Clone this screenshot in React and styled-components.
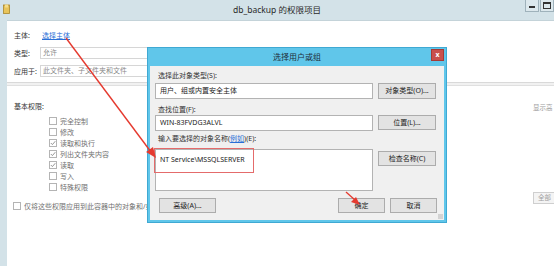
import React from 'react';
import styled, { createGlobalStyle } from 'styled-components';

const GlobalStyle = createGlobalStyle`
  html, body {
    margin: 0;
    padding: 0;
    background: #ffffff;
  }
  body {
    font-family: "Noto Sans", "Noto Sans CJK SC", sans-serif;
    font-size: 7px;
    color: #333;
  }
`;

const Frame = styled.div`
  position: relative;
  width: 554px;
  height: 266px;
  background: #d3e2e8;
  display: flex;
  flex-direction: column;
  overflow: hidden;
`;

const TitleBar = styled.div`
  height: 20px;
  display: grid;
  grid-template-columns: 1fr auto 1fr;
  align-items: start;
`;

const TitleIcon = styled.div`
  padding: 4px 0 0 3px;
`;

const TitleText = styled.div`
  line-height: 20px;
  font-size: 8.5px;
  color: #2a2a2a;
`;

const Controls = styled.div`
  justify-self: end;
  display: flex;
  gap: 1px;
`;

const CtrlButton = styled.div`
  width: 14px;
  height: 12px;
  box-sizing: border-box;
  border: 1px solid #9fb2bb;
  border-top: none;
  background: #dce8ed;
  display: flex;
  align-items: center;
  justify-content: center;
  &::after {
    content: '';
    display: block;
    width: 6px;
    height: ${p => (p.$max ? '4px' : '0')};
    border: ${p => (p.$max ? '1px solid #333' : 'none')};
    border-top: 2px solid #333;
    margin-top: ${p => (p.$max ? '0' : '3px')};
  }
`;

const Body = styled.div`
  flex: 1;
  margin-left: 7px;
  background: #fff;
  display: flex;
  flex-direction: column;
  border-top: 1px solid #c4d3d9;
`;

const TopSection = styled.div`
  height: 52px;
  padding: 9px 0 0 7px;
  border-bottom: 1px solid #d9d9d9;
  display: flex;
  flex-direction: column;
`;

const FieldRow = styled.div`
  display: grid;
  grid-template-columns: 26px 300px;
  align-items: center;
  height: ${p => p.$h || 12}px;
  margin-top: ${p => p.$mt || 0}px;
`;

const Label = styled.span`
  font-size: 7px;
  color: #333;
  white-space: nowrap;
`;

const Link = styled.span`
  color: #2a6fd6;
  text-decoration: underline;
  font-size: 7px;
  padding-left: ${p => (p.$inline ? 0 : 2)}px;
`;

const FlatInput = styled.div`
  height: 12px;
  box-sizing: border-box;
  border: 1px solid #d6d6d6;
  padding-left: 2px;
  font-size: 7px;
  line-height: 10px;
  color: #8a8a8a;
  white-space: nowrap;
`;

const Band = styled.div`
  height: 2px;
  background: #f1f1f1;
`;

const Lower = styled.div`
  flex: 1;
  border-top: 1px solid #e0e0e0;
  display: grid;
  grid-template-columns: 1fr 21px;
`;

const LeftCol = styled.div`
  padding: 16px 0 0 7px;
  display: flex;
  flex-direction: column;
`;

const Heading = styled.div`
  height: 10px;
  line-height: 10px;
  font-size: 7px;
  color: #333;
`;

const CheckList = styled.div`
  margin: 4px 0 0 35px;
  display: flex;
  flex-direction: column;
`;

const CheckItem = styled.div`
  height: 10.9px;
  display: flex;
  align-items: center;
  gap: 3px;
  font-size: 7px;
  color: #707070;
  white-space: nowrap;
`;

const Box = styled.span`
  width: 6px;
  height: 6px;
  border: 1px solid #b4b4b4;
  background: #fff;
  display: inline-flex;
  align-items: center;
  justify-content: center;
  flex-shrink: 0;
`;

const BottomCheck = styled(CheckItem)`
  margin: 8px 0 0 -1px;
`;

const RightCol = styled.div`
  padding-top: 17px;
  display: flex;
  flex-direction: column;
`;

const GrayText = styled.div`
  font-size: 6.5px;
  color: #9a9a9a;
  white-space: nowrap;
  line-height: 10px;
`;

const StubButton = styled.div`
  margin-top: 79px;
  height: 12px;
  width: 21px;
  box-sizing: border-box;
  border: 1px solid #cfcfcf;
  border-right: none;
  background: #f4f4f4;
  font-size: 6.5px;
  line-height: 10px;
  padding-left: 4px;
  color: #a0a0a0;
  white-space: nowrap;
`;

/* dialog window floating over the properties page */
const Dialog = styled.div`
  position: absolute;
  left: 147px;
  top: 47px;
  width: 300px;
  height: 176px;
  box-sizing: border-box;
  background: #60c6ea;
  border: 1px solid #3fa9d3;
  display: flex;
  flex-direction: column;
`;

const DialogTitle = styled.div`
  position: relative;
  height: 18px;
  line-height: 18px;
  text-align: center;
  font-size: 8px;
  color: #1f2f3a;
`;

const CloseButton = styled.div`
  position: absolute;
  right: 2px;
  top: 1px;
  width: 11px;
  height: 10px;
  background: #c9504c;
  border: 1px solid #a63a36;
  color: #fff;
  font-size: 7px;
  font-weight: bold;
  line-height: 10px;
  text-align: center;
`;

const DialogBody = styled.div`
  position: relative;
  flex: 1;
  margin: 0 2px 2px;
  background: #f0f0f0;
  padding: 5px 7px 0 5px;
  display: flex;
  flex-direction: column;
`;

const Grip = styled.div`
  position: absolute;
  right: 1px;
  bottom: 1px;
  width: 5px;
  height: 5px;
  background: radial-gradient(circle, #b0b0b0 0.6px, transparent 0.8px) 0 0 / 2px 2px;
`;

const DLabel = styled.div`
  height: 10px;
  line-height: 10px;
  padding-left: 3px;
  margin-top: ${p => p.$mt || 0}px;
  font-size: 7px;
  color: #333;
  white-space: nowrap;
`;

const DRow = styled.div`
  display: grid;
  grid-template-columns: 218px 58px;
  column-gap: 5px;
  align-items: start;
  margin-top: ${p => p.$mt || 0}px;
`;

const DInput = styled.div`
  position: relative;
  height: ${p => p.$h || 16}px;
  box-sizing: border-box;
  border: 1px solid #b3b3b3;
  background: #fff;
  padding: ${p => (p.$area ? '5px 4px' : '0 4px')};
  line-height: ${p => (p.$area ? '10px' : '14px')};
  font-size: 7px;
  color: #222;
  white-space: nowrap;
`;

const Highlight = styled.div`
  position: absolute;
  left: -2px;
  top: -2px;
  width: 98px;
  height: 23px;
  border: 1px solid #e46b6b;
`;

const DButton = styled.div`
  height: ${p => p.$h || 16}px;
  width: ${p => p.$w || 58}px;
  box-sizing: border-box;
  border: 1px solid #acacac;
  background: #e3e3e3;
  font-size: 7px;
  line-height: ${p => (p.$h || 16) - 2}px;
  text-align: center;
  color: #222;
  margin-top: ${p => p.$mt || 0}px;
  white-space: nowrap;
`;

const ButtonBar = styled.div`
  margin-top: 7px;
  display: flex;
  gap: 5px;
  padding-left: 4px;
`;

const Spacer = styled.div`
  flex: 1;
`;

const Marks = styled.svg`
  position: absolute;
  left: 0;
  top: 0;
  pointer-events: none;
`;

function Check({ checked }) {
  return (
    <Box>
      {checked && (
        <svg width="6" height="6" viewBox="0 0 6 6">
          <path d="M0.8 3 L2.4 4.6 L5.3 1.2" fill="none" stroke="#8a8a8a" strokeWidth="0.9" />
        </svg>
      )}
    </Box>
  );
}

const perms = [
  { name: '完全控制', on: false },
  { name: '修改', on: false },
  { name: '读取和执行', on: true },
  { name: '列出文件夹内容', on: true },
  { name: '读取', on: true },
  { name: '写入', on: false },
  { name: '特殊权限', on: false },
];

export default function App() {
  return (
    <>
      <GlobalStyle />
      <Frame>
        <TitleBar>
          <TitleIcon>
            <svg width="8" height="10" viewBox="0 0 8 10">
              <rect x="0.5" y="1" width="6" height="8.5" fill="#e8c45a" stroke="#a9852a" strokeWidth="0.8" />
              <rect x="2" y="0.5" width="3" height="3" fill="#f4dd8a" />
            </svg>
          </TitleIcon>
          <TitleText>db_backup 的权限项目</TitleText>
          <Controls>
            <CtrlButton />
            <CtrlButton $max />
          </Controls>
        </TitleBar>
        <Body>
          <TopSection>
            <FieldRow $h={10}>
              <Label>主体:</Label>
              <Link>选择主体</Link>
            </FieldRow>
            <FieldRow $mt={7}>
              <Label>类型:</Label>
              <FlatInput>允许</FlatInput>
            </FieldRow>
            <FieldRow $mt={6}>
              <Label>应用于:</Label>
              <FlatInput>此文件夹、子文件夹和文件</FlatInput>
            </FieldRow>
          </TopSection>
          <Band />
          <Lower>
            <LeftCol>
              <Heading>基本权限:</Heading>
              <CheckList>
                {perms.map(p => (
                  <CheckItem key={p.name}>
                    <Check checked={p.on} />
                    {p.name}
                  </CheckItem>
                ))}
              </CheckList>
              <BottomCheck>
                <Check />
                仅将这些权限应用到此容器中的对象和/或容器
              </BottomCheck>
            </LeftCol>
            <RightCol>
              <GrayText>显示高</GrayText>
              <StubButton>全部</StubButton>
            </RightCol>
          </Lower>
        </Body>

        <Dialog>
          <DialogTitle>
            选择用户或组
            <CloseButton>x</CloseButton>
          </DialogTitle>
          <DialogBody>
            <DLabel>选择此对象类型(S):</DLabel>
            <DRow $mt={2}>
              <DInput>用户、组或内置安全主体</DInput>
              <DButton>对象类型(O)...</DButton>
            </DRow>
            <DLabel $mt={6}>查找位置(F):</DLabel>
            <DRow>
              <DInput>WIN-83FVDG3ALVL</DInput>
              <DButton $h={15}>位置(L)...</DButton>
            </DRow>
            <DLabel $mt={3}>
              输入要选择的对象名称(<Link $inline>例如</Link>)(E):
            </DLabel>
            <DRow $mt={5}>
              <DInput $area $h={42}>
                NT Service\MSSQLSERVER
                <Highlight />
              </DInput>
              <DButton $mt={2} $h={15}>检查名称(C)</DButton>
            </DRow>
            <ButtonBar>
              <DButton $w={57} $h={15}>高级(A)...</DButton>
              <Spacer />
              <DButton $w={47} $h={15}>确定</DButton>
              <DButton $w={47} $h={15}>取消</DButton>
            </ButtonBar>
            <Grip />
          </DialogBody>
        </Dialog>

        <Marks width="554" height="266" viewBox="0 0 554 266">
          <line x1="66" y1="38" x2="151" y2="152" stroke="#e53a2f" strokeWidth="1.4" />
          <polygon points="156,158 146,152 153,147" fill="#e53a2f" />
          <line x1="346" y1="192" x2="355" y2="200" stroke="#e53a2f" strokeWidth="1.4" />
          <polygon points="360,205 351,202 356,197" fill="#e53a2f" />
        </Marks>
      </Frame>
    </>
  );
}
